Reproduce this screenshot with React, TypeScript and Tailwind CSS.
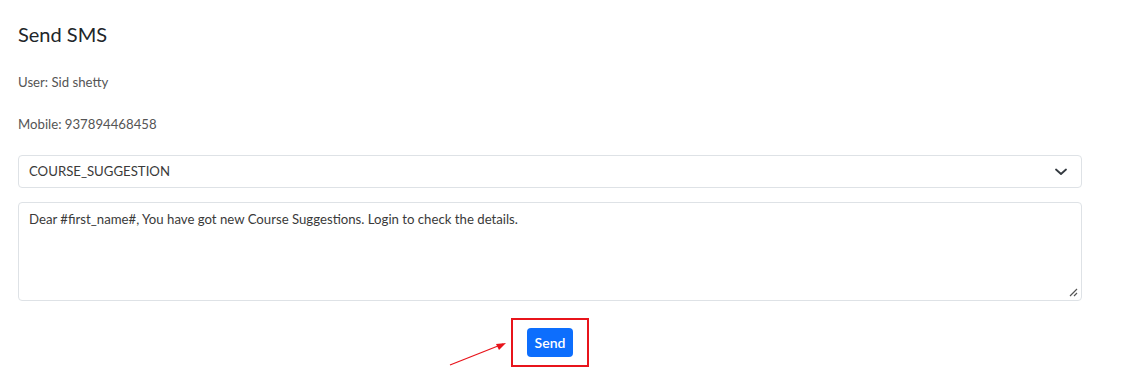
import React from 'react';

const font = { fontFamily: '"Source Sans Pro", Lato, "Liberation Sans", sans-serif' };

export default function App() {
  return (
    <div className="relative w-[1133px] h-[383px] bg-white text-[#212529]" style={font}>
      <div className="pl-[18px] pt-[22px] w-[1082px]">
        <h2 className="text-[20px] leading-[24px] text-[#212529]">Send SMS</h2>
        <p className="mt-[28px] text-[13.2px] leading-[16px] text-[#555]">User: Sid shetty</p>
        <p className="mt-[26px] text-[13.2px] leading-[16px] text-[#555]">Mobile: 937894468458</p>

        <div className="mt-[23px] h-[33px] border border-[#dee2e6] rounded-[4px] flex items-center justify-between pl-[10px] pr-[14px]">
          <span className="text-[13.2px] text-[#3a3a3a]">COURSE_SUGGESTION</span>
          <svg width="12" height="8" viewBox="0 0 12 8" fill="none">
            <path d="M1 1.5 L6 6 L11 1.5" stroke="#343a40" strokeWidth="1.8" strokeLinecap="round" strokeLinejoin="round" />
          </svg>
        </div>

        <div className="relative mt-[14px] h-[99px] border border-[#dee2e6] rounded-[4px] px-[10px] pt-[3px]">
          <span className="text-[13.2px] leading-[20px] text-[#3a3a3a]">
            Dear #first_name#, You have got new Course Suggestions. Login to check the details.
          </span>
          <svg className="absolute right-[3px] bottom-[3px]" width="9" height="9" viewBox="0 0 9 9">
            <path d="M8 1 L1 8 M8 5 L5 8" stroke="#555" strokeWidth="1.2" />
          </svg>
        </div>

        <div className="flex justify-center mt-[17px]">
          <div className="border-2 border-[#e8141b] px-[14px] py-[8px]">
            <button className="bg-[#0d6efd] text-white text-[14px] font-semibold rounded-[4px] w-[46px] h-[29px]">
              Send
            </button>
          </div>
        </div>
      </div>

      <svg className="absolute left-[445px] top-[336px]" width="70" height="35" viewBox="0 0 70 35">
        <line x1="5" y1="29" x2="58" y2="8" stroke="#e8141b" strokeWidth="1.3" />
        <path d="M61 7 L51 8 L54 14 Z" fill="#e8141b" />
      </svg>
    </div>
  );
}
